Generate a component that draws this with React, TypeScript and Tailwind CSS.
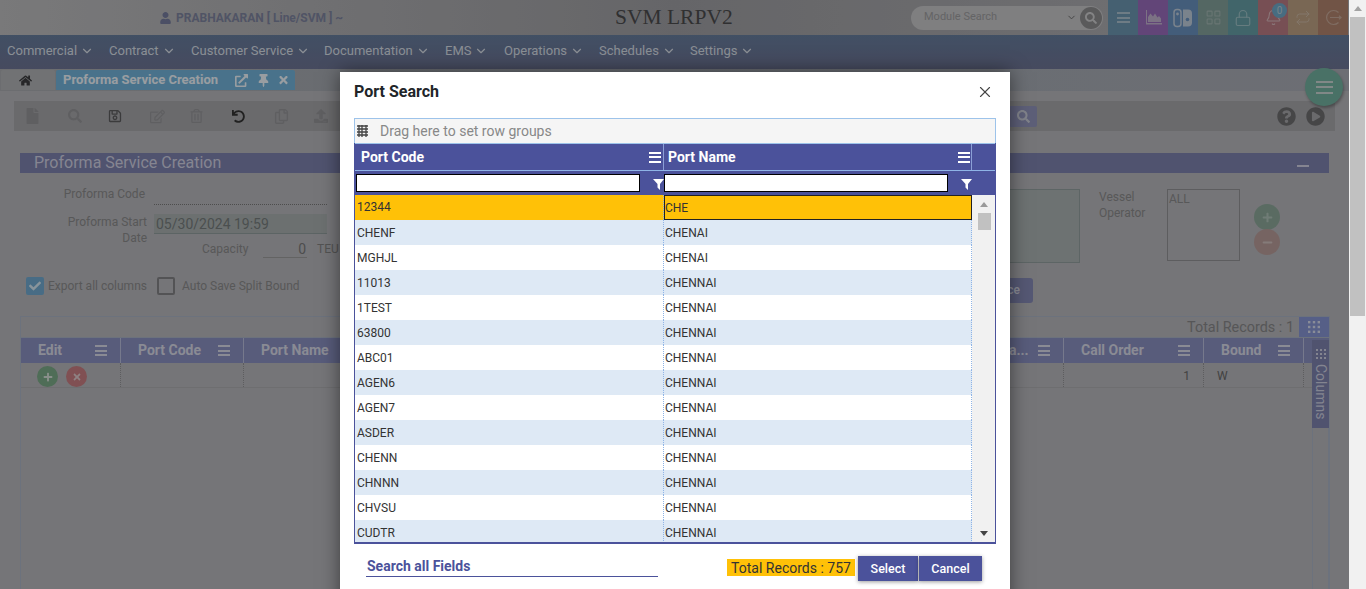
import {
  FaUser, FaHome, FaExternalLinkAlt, FaThumbtack, FaTimes, FaFile, FaSearch, FaRegSave, FaRegEdit, FaRegTrashAlt,
  FaUndo, FaRegCopy, FaUpload, FaQuestionCircle, FaPlayCircle, FaPlus, FaMinus, FaCheck,
} from "react-icons/fa";
import { Bell, ChevronDown, LayoutGrid, Lock, Repeat, X } from "lucide-react";

const navItems = [
  ["Commercial", "w-[102px]"],
  ["Contract", "w-[82px]"],
  ["Customer Service", "w-[133px]"],
  ["Documentation", "w-[121px]"],
  ["EMS", "w-[59px]"],
  ["Operations", "w-[95px]"],
  ["Schedules", "w-[91px]"],
  ["Settings", "w-[80px]"],
];

const rows = [
  ["12344", "CHE"],
  ["CHENF", "CHENAI"],
  ["MGHJL", "CHENAI"],
  ["11013", "CHENNAI"],
  ["1TEST", "CHENNAI"],
  ["63800", "CHENNAI"],
  ["ABC01", "CHENNAI"],
  ["AGEN6", "CHENNAI"],
  ["AGEN7", "CHENNAI"],
  ["ASDER", "CHENNAI"],
  ["CHENN", "CHENNAI"],
  ["CHNNN", "CHENNAI"],
  ["CHVSU", "CHENNAI"],
  ["CUDTR", "CHENNAI"],
];

function Switch() {
  return (
    <svg width="20" height="20" viewBox="0 0 20 20" fill="none">
      <rect x="1" y="1.5" width="7" height="17" rx="3" stroke="currentColor" strokeWidth="1.5" />
      <path d="M10 1.5h5a4 4 0 0 1 4 4v9a4 4 0 0 1-4 4h-5z" fill="currentColor" />
      <circle cx="4.5" cy="6" r="1.4" fill="currentColor" />
      <circle cx="14.5" cy="11.5" r="1.8" fill="#688fbc" />
    </svg>
  );
}

function AreaChart() {
  return (
    <svg width="17" height="15" viewBox="0 0 17 15" fill="currentColor">
      <path d="M1 0h1v13h15v1.5H1z" />
      <path d="M3 12V7l2.5-3.5L8 6.5l2-3 2.5 4 1.5-1.5 2 2.5V12z" />
    </svg>
  );
}

function ExitCircle() {
  return (
    <svg width="17" height="17" viewBox="0 0 17 17" fill="none" stroke="currentColor" strokeWidth="1.2">
      <path d="M13.5 3.5a7 7 0 1 0 0 10" />
      <path d="M5 8.5h11M14 6.8l2 1.7-2 1.7" />
    </svg>
  );
}

function Dots({ size }: { size: number }) {
  return (
    <svg width={size} height={size} viewBox="0 0 12 12" fill="currentColor">
      <rect x="0" y="0" width="2.4" height="2.4" />
      <rect x="4.8" y="0" width="2.4" height="2.4" />
      <rect x="9.6" y="0" width="2.4" height="2.4" />
      <rect x="0" y="4.8" width="2.4" height="2.4" />
      <rect x="4.8" y="4.8" width="2.4" height="2.4" />
      <rect x="9.6" y="4.8" width="2.4" height="2.4" />
      <rect x="0" y="9.6" width="2.4" height="2.4" />
      <rect x="4.8" y="9.6" width="2.4" height="2.4" />
      <rect x="9.6" y="9.6" width="2.4" height="2.4" />
    </svg>
  );
}

function Funnel() {
  return (
    <svg width="11" height="11" viewBox="0 0 11 11" fill="white">
      <path d="M0 0h11L7 5v6L4.5 8.5V5z" />
    </svg>
  );
}

function Hamburger({ className }: { className: string }) {
  return (
    <span className={`flex flex-col justify-between w-[12px] h-[11px] ${className}`}>
      <span className="h-[2px] bg-current" />
      <span className="h-[2px] bg-current" />
      <span className="h-[2px] bg-current" />
    </span>
  );
}

function HeadCell({ label, width, align = "pl-[17px]" }: { label: string; width: string; align?: string }) {
  return (
    <div className={`${width} h-full shrink-0 flex items-center justify-between pr-[13px] ${align} border-r border-[#b6bad8] font-bold text-[14px] text-[#d5d6e3] whitespace-nowrap`}>
      <span>{label}</span>
      <Hamburger className="text-[#d5d6e3]" />
    </div>
  );
}

export default function App() {
  return (
    <div className="flex w-full h-[589px] overflow-hidden font-['Roboto',sans-serif]">
      <div className="relative w-[1349px] h-[589px] shrink-0 overflow-hidden bg-[#b4b4b8]">
        {/* top header */}
        <div className="h-[35px] flex items-center bg-gradient-to-r from-[#bababc] via-[#9c9ca0] to-[#b0b0b4]">
          <div className="w-[160px]" />
          <FaUser className="w-[11px] h-[12px] text-[#737a9b]" />
          <span className="ml-[5px] w-[439px] text-[12px] font-bold text-[#7b819c] whitespace-nowrap">PRABHAKARAN [ Line/SVM ] ~</span>
          <span className="w-[296px] text-[21.5px] leading-none text-[#4a4a4c] font-['Liberation_Serif',serif] whitespace-nowrap">SVM LRPV2</span>
          <div className="w-[192px] h-[24px] rounded-full bg-[#c3c3c5] flex items-center pl-[13px] pr-[1px] text-[11px] text-[#9a9a9c]">
            <span className="flex-1">Module Search</span>
            <ChevronDown className="w-[11px] h-[11px] text-[#666] mr-[3px]" />
            <span className="w-[22px] h-[22px] rounded-full bg-[#8b8b8d] flex items-center justify-center">
              <FaSearch className="w-[12px] h-[12px] text-[#c9c9cb]" />
            </span>
          </div>
          <div className="w-[5px]" />
          <div className="flex h-[35px]">
            <div className="w-[30px] bg-[#6b94ae] flex items-center justify-center text-[#a9bfcc]">
              <span className="flex flex-col justify-between w-[13px] h-[11px]">
                <span className="h-[2px] bg-current" />
                <span className="h-[2px] bg-current" />
                <span className="h-[2px] bg-current" />
              </span>
            </div>
            <div className="w-[30px] bg-[#976bb8] flex items-center justify-center text-[#bfb0cb]"><AreaChart /></div>
            <div className="w-[30px] bg-[#688fbc] flex items-center justify-center text-[#bcc9d8]"><Switch /></div>
            <div className="w-[30px] bg-[#819e98] flex items-center justify-center"><LayoutGrid className="w-[17px] h-[17px] text-[#a2b5b1]" strokeWidth={1.5} /></div>
            <div className="w-[30px] bg-[#659ca3] flex items-center justify-center"><Lock className="w-[18px] h-[18px] text-[#9dbfc4]" strokeWidth={1.5} /></div>
            <div className="relative w-[30px] bg-[#b77a82] flex items-center justify-center">
              <Bell className="w-[17px] h-[17px] text-[#d3b5b9]" strokeWidth={1.5} />
              <span className="absolute right-[1px] top-[3px] w-[15px] h-[15px] rounded-full bg-[#6ea7c6] text-[10px] text-center leading-[15px] text-[#b9cbd6]">0</span>
            </div>
            <div className="w-[30px] bg-[#bb9e82] flex items-center justify-center"><Repeat className="w-[16px] h-[16px] text-[#c9b7a3]" strokeWidth={1.5} /></div>
            <div className="w-[30px] bg-[#ae826c] flex items-center justify-center text-[#c4a797]"><ExitCircle /></div>
          </div>
        </div>

        {/* main nav */}
        <nav className="h-[34px] flex items-center pl-[7px] pb-[3px] bg-gradient-to-b from-[#657b9a] to-[#6c7292] text-[13px] text-[#d5dce4]">
          {navItems.map(([label, width]) => (
            <div key={label} className={`${width} shrink-0 flex items-center gap-[3px]`}>
              {label}
              <ChevronDown className="w-[14px] h-[14px]" />
            </div>
          ))}
        </nav>

        {/* tab strip */}
        <div className="relative h-[22px] flex items-start pt-[1px] pl-[1px] bg-gradient-to-r from-[#a6a8ac] via-[#a0a7b0] to-[#a8aab2]">
          <div className="w-[54px] h-[20px] pr-[6px] bg-[#aeb0b3] flex items-center justify-center text-[#3d3d3f] rounded-t-[2px]">
            <FaHome className="w-[13px] h-[13px]" />
          </div>
          <div className="w-[239px] h-[20px] ml-[1px] bg-[#71b0d6] rounded-t-[2px] flex items-center pl-[7px] text-[#ebf2f8]">
            <span className="w-[172px] text-[13px] font-bold whitespace-nowrap">Proforma Service Creation</span>
            <FaExternalLinkAlt className="w-[13px] h-[13px]" />
            <FaThumbtack className="w-[11px] h-[13px] ml-[10px]" />
            <FaTimes className="w-[11px] h-[12px] ml-[9px]" />
          </div>
          {/* floating menu button */}
          <div className="absolute left-[1305px] top-[-1px] w-[38px] h-[38px] rounded-full bg-[#71ae9d] flex items-center justify-center shadow-[1px_2px_3px_rgba(0,0,0,0.3)]">
            <span className="flex flex-col justify-between w-[17px] h-[13px] text-[#c6d2cf]">
              <span className="h-[2px] bg-current" />
              <span className="h-[2px] bg-current" />
              <span className="h-[2px] bg-current" />
            </span>
          </div>
        </div>

        {/* toolbar */}
        <div className="mt-[10px] ml-[14px] w-[1321px] h-[30px] bg-[#a3a3a7] flex items-center text-[#939396]">
          <div className="flex items-center w-[340px] pl-[12px]">
            <div className="w-[42px]"><FaFile className="w-[13px] h-[16px]" /></div>
            <div className="w-[40px]"><FaSearch className="w-[14px] h-[14px]" /></div>
            <div className="w-[42px] text-[#5b5b5d]"><FaRegSave className="w-[14px] h-[14px]" /></div>
            <div className="w-[40px]"><FaRegEdit className="w-[15px] h-[15px]" /></div>
            <div className="w-[42px]"><FaRegTrashAlt className="w-[13px] h-[14px]" /></div>
            <div className="w-[42px] text-[#333]"><FaUndo className="w-[13px] h-[13px]" /></div>
            <div className="w-[40px]"><FaRegCopy className="w-[15px] h-[15px]" /></div>
            <div><FaUpload className="w-[14px] h-[14px]" /></div>
          </div>
          <div className="flex-1" />
          <div className="w-[28px] h-[21px] mr-[240px] rounded-[2px] bg-[#8f92b8] flex items-center justify-center text-[#c7cad6]">
            <FaSearch className="w-[13px] h-[13px]" />
          </div>
          <FaQuestionCircle className="w-[19px] h-[19px] text-[#6c6c6e]" />
          <FaPlayCircle className="w-[19px] h-[19px] ml-[10px] mr-[10px] text-[#6c6c6e]" />
        </div>

        {/* section title */}
        <div className="mt-[22px] ml-[20px] w-[1309px] h-[20px] bg-[#7b80ab] flex items-center justify-between pl-[14px] pr-[20px] text-[#cdcddf]">
          <span className="text-[16px]">Proforma Service Creation</span>
          <span className="w-[12px] h-[2px] mt-[6px] bg-current" />
        </div>

        {/* form */}
        <div className="h-[143px] ml-[20px] flex text-[12px] text-[#888889]">
          <div className="w-[320px] shrink-0">
            <div className="mt-[12px] flex h-[20px]">
              <span className="w-[125px] text-right">Proforma Code</span>
              <div className="ml-[9px] w-[173px] border-b border-dotted border-[#777]" />
            </div>
            <div className="mt-[9px] flex h-[20px]">
              <span className="w-[127px] pl-[42px] text-right leading-[16px]">Proforma Start Date</span>
              <div className="ml-[7px] w-[173px] h-[20px] bg-[#a6adad] border-b border-[#8e9a9a] pl-[2px] text-[14px] leading-[20px] text-[#747a7a]">05/30/2024 19:59</div>
            </div>
            <div className="mt-[6px] flex h-[18px] items-center">
              <span className="ml-[182px] w-[61px]">Capacity</span>
              <span className="w-[44px] h-[18px] text-right pr-[1px] border-b border-[#999] text-[14px] leading-[18px] text-[#777]">0</span>
              <span className="ml-[10px] text-[#808080]">TEU</span>
            </div>
            <div className="mt-[19px] flex items-center h-[18px]">
              <span className="ml-[6px] w-[18px] h-[18px] rounded-[2px] bg-[#6fa7cc] flex items-center justify-center text-[#d3e4ef]">
                <FaCheck className="w-[12px] h-[12px]" />
              </span>
              <span className="ml-[4px] w-[109px]">Export all columns</span>
              <span className="w-[18px] h-[18px] rounded-[2px] border-2 border-[#808083]" />
              <span className="ml-[7px]">Auto Save Split Bound</span>
            </div>
          </div>
          <div className="flex-1" />
          <div className="w-[740px] shrink-0 flex">
            <div className="w-[471px] shrink-0">
              <div className="mt-[16px] ml-[91px] w-[380px] h-[74px] bg-[#a8b0b0] border border-[#8f9c9c]" />
              <div className="mt-[15px] ml-[291px] w-[133px] h-[25px] rounded-[3px] bg-[#8387b3] text-right pr-[13px] leading-[25px] text-[#d5d6e3] text-[12px] font-medium">Add Service</div>
            </div>
            <div className="ml-[19px] mt-[16px] w-[68px] leading-[16px]">Vessel Operator</div>
            <div className="mt-[16px] w-[73px] h-[72px] border border-[#909092] text-[12px] pl-[1px]">ALL</div>
            <div className="ml-[14px] mt-[31px] flex flex-col">
              <span className="w-[26px] h-[26px] rounded-full bg-[#8aa597] flex items-center justify-center text-[#adbfb6]"><FaPlus className="w-[11px] h-[11px]" /></span>
              <span className="w-[26px] h-[26px] -mt-[1px] rounded-full bg-[#b59a97] flex items-center justify-center text-[#cdbdbb]"><FaMinus className="w-[11px] h-[11px]" /></span>
            </div>
          </div>
        </div>

        {/* back grid */}
        <div className="ml-[20px] w-[1310px] h-[400px] border border-[#a6afc0]">
          <div className="h-[21px] flex items-center justify-end border-b border-[#a6afc0] text-[14.4px] text-[#858587]">
            <span className="mr-[5px] mt-[2px]">Total Records : 1</span>
            <span className="w-[30px] h-[20px] bg-[#8493cf] flex items-center justify-center text-[#d3d8ea]">
              <Dots size={12} />
            </span>
          </div>
          <div className="h-[25px] flex bg-[#888ebe]">
            <HeadCell label="Edit" width="w-[100px]" />
            <HeadCell label="Port Code" width="w-[123px]" />
            <HeadCell label="Port Name" width="w-[640px]" />
            <HeadCell label="Terminal Na..." width="w-[180px]" align="pl-[56px]" />
            <HeadCell label="Call Order" width="w-[140px]" />
            <HeadCell label="Bound" width="w-[100px]" />
          </div>
          <div className="h-[25px] flex border-b border-[#a9a9ad] text-[12px] text-[#666]">
            <div className="w-[100px] flex items-center pl-[16px] pt-[3px] gap-[8px] border-r border-dotted border-[#909092]">
              <span className="w-[21px] h-[21px] rounded-full bg-[#7aa886] flex items-center justify-center text-[#d3dcd5]"><FaPlus className="w-[10px] h-[10px]" /></span>
              <span className="w-[21px] h-[21px] rounded-full bg-[#c57c80] flex items-center justify-center text-[#dcc8c9]"><FaTimes className="w-[10px] h-[10px]" /></span>
            </div>
            <div className="w-[123px] border-r border-dotted border-[#909092]" />
            <div className="w-[640px]" />
            <div className="w-[180px] border-r border-dotted border-[#909092]" />
            <div className="w-[140px] border-r border-dotted border-[#909092] text-right pr-[13px] leading-[26px]">1</div>
            <div className="w-[100px] border-r border-dotted border-[#909092] pl-[13px] leading-[26px]">W</div>
          </div>
          {/* columns side tab */}
          <div className="absolute left-[1312px] top-[340px] w-[17px] h-[88px] bg-[#7b80ab] flex flex-col items-center pt-[9px] text-[#c9cbdd]">
            <Dots size={10} />
            <span className="mt-[5px] text-[14px] leading-none [writing-mode:vertical-rl]">Columns</span>
          </div>
          <div className="absolute left-[1312px] top-[428px] w-[17px] h-[170px] border-x border-[#a6afc0]" />
        </div>

        {/* backdrop */}
        <div className="absolute inset-0 bg-black/35" />

        {/* Port Search modal */}
        <div className="absolute left-[340px] top-[72px] w-[670px] h-[540px] bg-white shadow-[0_0_18px_rgba(0,0,0,0.5)]">
          <div className="h-[46px] flex items-center justify-between pl-[14px] pr-[16px] pb-[6px]">
            <span className="text-[16px] font-bold text-[#212529]">Port Search</span>
            <X className="w-[18px] h-[18px] text-[#444]" strokeWidth={1.5} />
          </div>
          <div className="ml-[14px] w-[642px]">
            <div className="h-[25px] flex items-center bg-[#f5f5f5] border border-b-0 border-[#9dc3ea] pl-[2px] text-[14px] text-[#888]">
              <svg width="11" height="12" viewBox="0 0 11 12" className="text-[#444]">
                <path d="M0 1h11M0 4h11M0 7h11M0 10h11M2 0v12M5 0v12M9 0v12" stroke="currentColor" strokeWidth="1.3" />
              </svg>
              <span className="ml-[12px]">Drag here to set row groups</span>
            </div>
            <div className="border-x border-b-2 border-[#4b529b] bg-[#f1f1f1]">
              {/* header row */}
              <div className="h-[27px] flex bg-[#4b529b] text-white font-bold text-[14px] border-t border-[#9dc3ea]">
                <div className="w-[309px] flex items-center justify-between pl-[6px] pr-[2px] border-r border-[#8b9fd6]">
                  Port Code
                  <Hamburger className="text-white" />
                </div>
                <div className="w-[308px] flex items-center justify-between pl-[4px] pr-[1px] border-r border-[#8b9fd6]">
                  Port Name
                  <Hamburger className="text-white" />
                </div>
              </div>
              {/* filter row */}
              <div className="h-[25px] flex bg-[#4b529b] border-t border-[#8fb4e6]">
                <div className="w-[309px] flex items-center pl-[1px]">
                  <span className="w-[284px] h-[18px] bg-white border border-black" />
                  <span className="ml-[13px] mt-[2px]"><Funnel /></span>
                </div>
                <div className="w-[308px] flex items-center">
                  <span className="w-[284px] h-[18px] bg-white border border-black" />
                  <span className="ml-[13px] mt-[2px]"><Funnel /></span>
                </div>
              </div>
              {/* rows */}
              <div className="relative h-[347px] overflow-hidden text-[12px] text-[#333]">
                {rows.map(([code, name], i) => (
                  <div
                    key={code}
                    className={`w-[617px] h-[25px] flex ${i === 0 ? "leading-[24px] bg-[#ffc107]" : i % 2 === 1 ? "leading-[26px] bg-[#dee9f5]" : "leading-[26px] bg-white"}`}
                  >
                    <div className="w-[309px] pl-[2px] border-r border-dotted border-[#8fb4e6]">{code}</div>
                    <div className={`w-[308px] ${i === 0 ? "border border-[#222]" : "pl-[1px] border-r border-dotted border-[#8fb4e6]"}`}>{name}</div>
                  </div>
                ))}
                {/* grid scrollbar */}
                <div className="absolute right-[0px] top-0 w-[22px] h-full flex flex-col items-center">
                  <span className="mt-[7px] border-x-[4px] border-x-transparent border-b-[5px] border-b-[#9a9a9a]" />
                  <span className="mt-[6px] ml-[1px] w-[13px] h-[17px] bg-[#c1c1c1]" />
                  <span className="mt-auto mb-[6px] border-x-[4px] border-x-transparent border-t-[5px] border-t-[#444]" />
                </div>
              </div>
            </div>
          </div>
          {/* footer */}
          <div className="mt-[12px] ml-[26px] w-[616px] flex items-start">
            <div className="mt-[3px] w-[292px] h-[18px] border-b border-[#4b529b] pl-[1px] text-[14px] font-bold leading-[15px] text-[#4b529b]">Search all Fields</div>
            <div className="ml-[69px] mt-[3px] w-[128px] h-[17px] bg-[#ffc107] text-center text-[14px] leading-[19px] text-[#333]">Total Records : 757</div>
            <div className="ml-[3px] w-[60px] h-[25px] bg-[#4b529b] text-center text-[12.5px] font-medium leading-[26px] text-white shadow-[0_1px_4px_rgba(0,0,0,0.4)]">Select</div>
            <div className="ml-[1px] w-[63px] h-[25px] bg-[#4b529b] text-center text-[12.5px] font-medium leading-[26px] text-white shadow-[0_1px_4px_rgba(0,0,0,0.4)]">Cancel</div>
          </div>
        </div>
      </div>

      {/* page scrollbar */}
      <div className="w-[17px] h-[589px] shrink-0 bg-[#f1f1f1] flex flex-col items-center">
        <span className="mt-[6px] border-x-[4px] border-x-transparent border-b-[5px] border-b-[#a3a3a3]" />
        <span className="mt-[6px] w-[15px] h-[299px] bg-[#c1c1c1]" />
      </div>
    </div>
  );
}
